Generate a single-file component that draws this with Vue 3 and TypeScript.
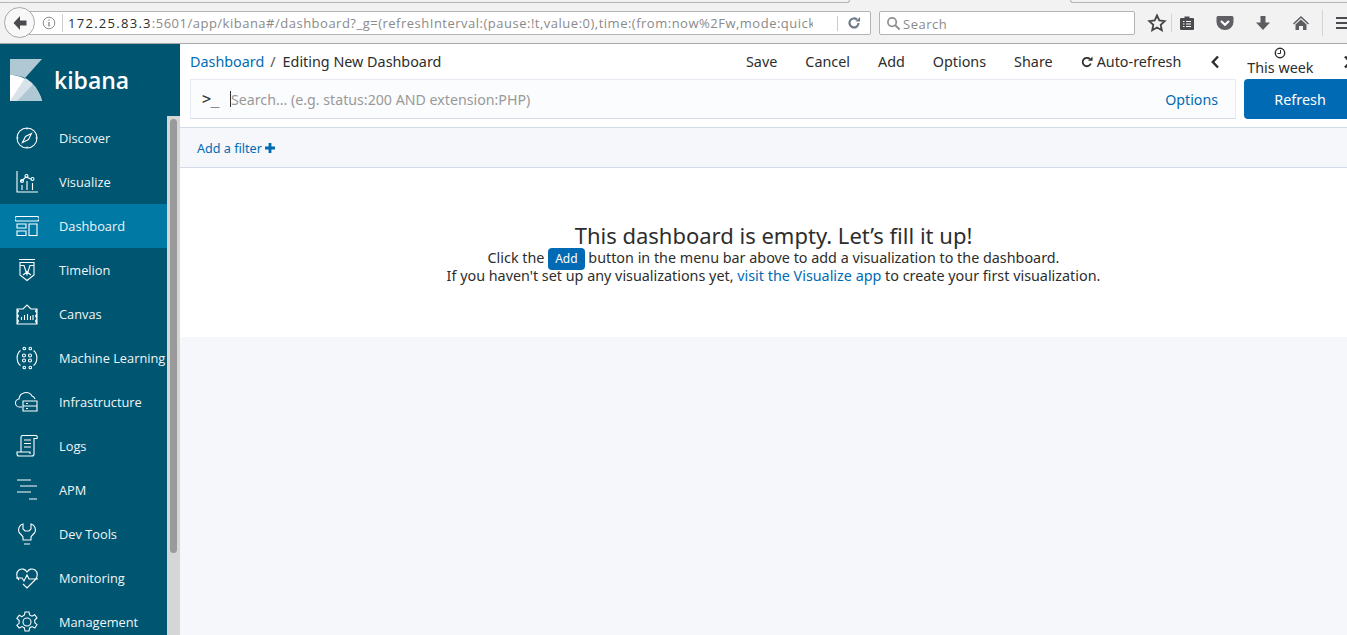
<script setup lang="ts">
interface NavItem {
  label: string
  icon: string
  active?: boolean
}

// icons are stroked on a 24 box, white-ish on the teal sidebar
const navItems: NavItem[] = [
  { label: 'Discover', icon: 'M12 2a10 10 0 1 0 0 20a10 10 0 1 0 0-20M16.500 7.500l-3 6-6 3 3-6zM12 2v1.500M12 20.500V22M2 12h1.500M20.500 12H22' },
  { label: 'Visualize', icon: 'M2 1v21h21M6 11.500l5-4.500 6 2.500M5.500 11a1.500 1.500 0 1 0 3 0a1.500 1.500 0 1 0-3 0M10 6a1.500 1.500 0 1 0 3 0a1.500 1.500 0 1 0-3 0M16 9a1.500 1.500 0 1 0 3 0a1.500 1.500 0 1 0-3 0M7 15v5M12 11v9M17.500 13v7' },
  { label: 'Dashboard', icon: 'M2 2.500h20a1 1 0 0 1 0 4.500H2a1 1 0 0 1 0-4.500zM2 10h9v4H2zM2 17h9v4.500H2zM14 10h8v11.500h-8z', active: true },
  { label: 'Timelion', icon: 'M4 1.500h16M5 4.500h14V17l-7 5.500L5 17zM5 7.500h4l3 9 3-9h4M8 17l4-3 4 3' },
  { label: 'Canvas', icon: 'M2 7h6l4-4 4 4h6v15H2zM2 7l1.500 2L2 11.500 3.500 14 2 16.500 3.500 19 2 22M22 7l-1.500 2 1.500 2.500-1.500 2.500 1.500 2.500-1.500 2.500L22 22M6.500 18v-3M9.500 18v-5M12.500 18v-6M15.500 18v-4M18 18v-5' },
  { label: 'Machine Learning', icon: 'M8 2.500a1.300 1.300 0 1 0 2.600 0a1.300 1.300 0 1 0-2.600 0M14 2.500a1.300 1.300 0 1 0 2.600 0a1.300 1.300 0 1 0-2.600 0M8 21.500a1.300 1.300 0 1 0 2.600 0a1.300 1.300 0 1 0-2.600 0M14 21.500a1.300 1.300 0 1 0 2.600 0a1.300 1.300 0 1 0-2.600 0M7.500 9.500a1.500 1.500 0 1 0 3 0a1.500 1.500 0 1 0-3 0M13.500 9.500a1.500 1.500 0 1 0 3 0a1.500 1.500 0 1 0-3 0M7.500 14.500a1.500 1.500 0 1 0 3 0a1.500 1.500 0 1 0-3 0M13.500 14.500a1.500 1.500 0 1 0 3 0a1.500 1.500 0 1 0-3 0M5.500 4.500C1 8 1 16 5.500 19.500M18.500 4.500C23 8 23 16 18.500 19.500' },
  { label: 'Infrastructure', icon: 'M7 17H5a4 4 0 0 1-1-8a7 7 0 0 1 13-3a5 5 0 0 1 3 3M8 11h14v10H8zM8 16h14M11 13.500h2M11 18.500h2' },
  { label: 'Logs', icon: 'M6 18V3a1.500 1.500 0 0 1 1.500-1.500H21a2 2 0 0 1 1 3h-3V20a2 2 0 0 1-2 2H4a2 2 0 0 1-2-2v-2h13v2M9 6h7M9 9.500h7M9 13h7' },
  { label: 'APM', icon: 'M2 2h14M5 8h17M2 14h14M14 21h8' },
  { label: 'Dev Tools', icon: 'M8 2C4 3 3 7 4 10c1 2 3 3 4 5v3h8v-3c1-2 3-3 4-5 1-3 0-7-4-8v5l-2 2h-4L8 7zM9 22h6' },
  { label: 'Monitoring', icon: 'M4 14C1 11 1 6 4 4c3-2 6-1 8 2 2-3 5-4 8-2 3 2 3 7 0 10l-8 8-4-4M1 12h6l2 3 3-6 2 4h9' },
  { label: 'Management', icon: 'M12 8a4 4 0 1 0 0 8a4 4 0 1 0 0-8M10 2h4l.6 3 2.400 1.200 2.700-1.500 2.300 3.300-2.300 2 .1 2.800 2.200 1.900-2.200 3.300-2.800-1.400-2.400 1.300-.6 3.100h-4l-.6-3.100-2.400-1.300-2.800 1.400L1.900 15.200 4.100 13.300l.1-2.800-2.300-2 2.300-3.300 2.700 1.500L9.400 5z' },
]

const pageActions = ['Save', 'Cancel', 'Add', 'Options', 'Share']
</script>

<template>
  <div class="window">
    <header class="browser-bar">
      <div class="tabstrip">
        <span class="tab-line left"></span>
        <span class="tab-line right"></span>
      </div>
      <div class="toolbar">
        <div class="url-wrap">
          <span class="back-btn">
            <svg width="18" height="18" viewBox="0 0 18 18"><path d="M9 2 2.500 9 9 16v-4.500h6.500v-5H9z" fill="#4a4a4f" /></svg>
          </span>
          <div class="url-box">
            <svg class="info" width="14" height="14" viewBox="0 0 14 14"><circle cx="7" cy="7" r="5.800" fill="none" stroke="#8c8c8c" /><path d="M7 6v4.500M7 3.500v1.300" stroke="#8c8c8c" stroke-width="1.400" /></svg>
            <span class="url-sep"></span>
            <span class="url-text"><b>172.25.83.3</b>:5601/app/kibana#/dashboard?_g=(refreshInterval:(pause:!t,value:0),time:(from:now%2Fw,mode:quick</span>
            <span class="reload">
              <svg width="14" height="14" viewBox="0 0 14 14"><path d="M11.500 7A4.500 4.500 0 1 1 10 3.600" fill="none" stroke="#6f7b87" stroke-width="2.200" /><path d="M8.500 5.500H13V1z" fill="#6f7b87" /></svg>
            </span>
          </div>
        </div>
        <div class="search-box">
          <svg width="15" height="15" viewBox="0 0 16 16"><circle cx="6.500" cy="6.500" r="4.500" fill="none" stroke="#909090" stroke-width="1.800" /><path d="m10 10 4.500 4.500" stroke="#909090" stroke-width="2.200" /></svg>
          <span class="search-label">Search</span>
        </div>
        <div class="tools">
          <svg class="t-star" width="20" height="20" viewBox="0 0 20 20"><path d="m10 2.500 2.300 5 5.400.6-4 3.700 1.100 5.400-4.800-2.700-4.800 2.700 1.100-5.400-4-3.700 5.400-.6z" fill="none" stroke="#444" stroke-width="1.800" /></svg>
          <span class="t-sep"></span>
          <svg class="t-list" width="16" height="16" viewBox="0 0 16 16"><path d="M2 3h3.500V1.500h5V3H14a1 1 0 0 1 1 1v10a1 1 0 0 1-1 1H2a1 1 0 0 1-1-1V4a1 1 0 0 1 1-1z" fill="#4a4a4f" /><path d="M4 6.500h1.500M7 6.500h5M4 9h1.500M7 9h5M4 11.500h1.500M7 11.500h5" stroke="#fff" /></svg>
          <svg class="t-pocket" width="18" height="16" viewBox="0 0 18 16"><path d="M2 1h14a1.500 1.500 0 0 1 1.500 1.500V7A8.500 8 0 0 1 .5 7V2.500A1.500 1.500 0 0 1 2 1z" fill="#5f5f64" /><path d="m5 6 4 3.800L13 6" fill="none" stroke="#fff" stroke-width="2.200" /></svg>
          <svg class="t-down" width="16" height="16" viewBox="0 0 16 16"><path d="M5.500 1h5v6.500H15L8 15 1 7.500h4.500z" fill="#5c5c61" /></svg>
          <svg class="t-home" width="18" height="16" viewBox="0 0 18 16"><path d="M9 1 1 8.500l1 1L9 3l7 6.500 1-1z" fill="#5c5c61" /><path d="M3.500 9.500 9 4.500l5.500 5V15H11v-4H7v4H3.500z" fill="#5c5c61" /></svg>
          <span class="t-sep t-sep-2"></span>
          <span class="burger"><i></i><i></i><i></i></span>
        </div>
      </div>
    </header>

    <div class="kibana">
      <aside class="sidebar">
        <div class="logo">
          <svg width="32" height="42" viewBox="0 0 32 42">
            <path d="M0 0h32L15 19C11 17 5 16 0 16z" fill="#b0c8d3" />
            <path d="M0 16c14 0 28 10 32 26H0z" fill="#fff" />
            <path d="M15 19c3 1.500 5.500 3.500 8 6L7 42H0z" fill="#d7e3e8" />
            <path d="M23 25c4 4 7 10 9 17H7z" fill="#b0c8d3" />
          </svg>
          <span class="logo-word">kibana</span>
        </div>
        <div class="nav-scroll">
          <nav class="nav">
            <a v-for="item in navItems" :key="item.label" class="nav-item" :class="{ active: item.active }">
              <svg class="nav-icon" width="24" height="24" viewBox="0 0 24 24"><path :d="item.icon" fill="none" stroke="#fff" stroke-width="1.100" /></svg>
              <span>{{ item.label }}</span>
            </a>
          </nav>
          <div class="scrollbar"><div class="thumb"></div></div>
        </div>
      </aside>

      <main class="content">
        <div class="top">
          <div class="menu-row">
            <div class="crumbs">
              <a class="link">Dashboard</a><span class="slash">/</span><span>Editing New Dashboard</span>
            </div>
            <div class="actions">
              <span v-for="action in pageActions" :key="action" class="action">{{ action }}</span>
              <span class="auto">
                <svg width="12" height="12" viewBox="0 0 12 12"><path d="M9.800 7.500A4.200 4.200 0 1 1 8.800 3" fill="none" stroke="#2d2d2d" stroke-width="1.800" /><path d="M7 4.800h4.500V.5z" fill="#2d2d2d" /></svg>
                Auto-refresh
              </span>
              <svg class="chev" width="10" height="14" viewBox="0 0 10 14"><path d="M8 1.500 2.800 7 8 12.500" fill="none" stroke="#2d2d2d" stroke-width="2.400" /></svg>
              <span class="week">
                <svg width="12" height="12" viewBox="0 0 12 12"><circle cx="6" cy="6" r="4.700" fill="none" stroke="#2d2d2d" stroke-width="1.400" /><path d="M6.500 3v3.500H3.500" fill="none" stroke="#2d2d2d" /></svg>
                <span>This week</span>
              </span>
              <svg class="chev" width="10" height="14" viewBox="0 0 10 14"><path d="M2 1.500 7.200 7 2 12.500" fill="none" stroke="#2d2d2d" stroke-width="2.400" /></svg>
            </div>
          </div>
          <div class="query-row">
            <div class="query">
              <span class="prompt">&gt;_</span>
              <span class="caret"></span>
              <span class="placeholder">Search... (e.g. status:200 AND extension:PHP)</span>
              <a class="link query-options">Options</a>
            </div>
            <button class="refresh">Refresh</button>
          </div>
        </div>

        <div class="filter-bar">
          <a class="link">Add a filter</a>
          <svg width="10" height="10" viewBox="0 0 10 10"><path d="M3.600 0h2.800v3.600H10v2.800H6.400V10H3.600V6.400H0V3.600h3.600z" fill="#006bb4" /></svg>
        </div>

        <section class="empty">
          <h2>This dashboard is empty. Let’s fill it up!</h2>
          <p>Click the <span class="add-chip">Add</span> button in the menu bar above to add a visualization to the dashboard.</p>
          <p>If you haven't set up any visualizations yet, <a class="link">visit the Visualize app</a> to create your first visualization.</p>
        </section>
      </main>
    </div>
  </div>
</template>

<style scoped>
.window {
  width: 1347px;
  height: 635px;
  overflow: hidden;
  display: flex;
  flex-direction: column;
  font-family: "Noto Sans", "Open Sans", sans-serif;
  color: #2d2d2d;
}

.browser-bar {
  height: 44px;
  flex: none;
  box-sizing: border-box;
  display: flex;
  flex-direction: column;
  background: #f2f2f2;
  border-bottom: 1px solid #a8a8a8;
}
.tabstrip {
  height: 3px;
  flex: none;
  display: flex;
  justify-content: space-between;
}
.tab-line {
  display: block;
  height: 3px;
  box-sizing: border-box;
  border-bottom: 1px solid #b5b5b5;
}
.tab-line.left {
  width: 850px;
  border-right: 1px solid #b5b5b5;
  border-bottom-right-radius: 5px;
}
.tab-line.right {
  width: 277px;
  border-left: 1px solid #b5b5b5;
  border-bottom-left-radius: 5px;
}
.toolbar {
  flex: 1;
  display: flex;
  align-items: center;
  padding-left: 5px;
  font-family: "Open Sans", sans-serif;
}
.url-wrap {
  position: relative;
  width: 866px;
  flex: none;
  padding-left: 14px;
  box-sizing: border-box;
}
.back-btn {
  position: absolute;
  left: -1px;
  top: -4px;
  width: 29px;
  height: 29px;
  border: 1px solid #a8a8a8;
  border-radius: 50%;
  background: #f8f8f8;
  display: flex;
  align-items: center;
  justify-content: center;
  z-index: 1;
}
.url-box {
  height: 24px;
  box-sizing: border-box;
  background: #fff;
  border: 1px solid #b4b4b4;
  border-radius: 2px;
  display: flex;
  align-items: center;
  padding-left: 22px;
  overflow: hidden;
  font-size: 13px;
}
.info { flex: none; }
.url-sep {
  flex: none;
  width: 1px;
  height: 18px;
  background: #ccc;
  margin: 0 5px 0 6px;
}
.url-text {
  flex: none;
  width: 745px;
  white-space: nowrap;
  overflow: hidden;
  color: #8a8a8a;
  letter-spacing: 0.5px;
}
.url-text b {
  font-weight: 400;
  color: #2b2b2b;
  letter-spacing: 1.28px;
}
.reload {
  flex: none;
  width: 32px;
  height: 15px;
  margin-left: auto;
  border-left: 1px solid #ccc;
  display: flex;
  align-items: center;
  justify-content: center;
}
.search-box {
  width: 256px;
  height: 24px;
  flex: none;
  box-sizing: border-box;
  margin-left: 8px;
  background: #fff;
  border: 1px solid #b4b4b4;
  border-radius: 2px;
  display: flex;
  align-items: center;
  gap: 2px;
  padding-left: 6px;
  font-size: 13px;
  letter-spacing: 0.5px;
  color: #8a8a8a;
}
.search-label { padding-top: 1px; }
.tools {
  flex: 1;
  display: flex;
  align-items: center;
  padding-left: 12px;
}
.tools svg { flex: none; }
.t-sep {
  width: 1px;
  flex: none;
  height: 18px;
  background: #d4d4d4;
  margin: 0 7px 0 4px;
}
.t-pocket { margin-left: 21px; }
.t-down { margin-left: 21px; }
.t-home { margin-left: 21px; }
.t-sep-2 { margin: 0 13px 0 12px; height: 26px; }
.burger {
  display: flex;
  flex-direction: column;
  gap: 3px;
  width: 12px;
  flex: none;
}
.burger i {
  display: block;
  height: 2px;
  background: #4a4a4f;
}

.kibana {
  flex: 1;
  display: flex;
  min-height: 0;
}
.sidebar {
  width: 180px;
  flex: none;
  background: #005571;
  display: flex;
  flex-direction: column;
  color: #fff;
  font-family: "Open Sans", sans-serif;
}
.logo {
  height: 72px;
  flex: none;
  display: flex;
  align-items: center;
  gap: 12px;
  padding: 0 0 0 10px;
  box-sizing: border-box;
}
.logo-word {
  font-size: 23px;
  font-weight: 600;
  line-height: 1;
}
.nav-scroll {
  flex: 1;
  display: flex;
  min-height: 0;
}
.nav {
  width: 167px;
  flex: none;
}
.nav-item {
  height: 44px;
  display: flex;
  align-items: center;
  padding-left: 15px;
  font-size: 12.8px;
  color: #f0f5f7;
  white-space: nowrap;
}
.nav-item.active { background: #0079a5; }
.nav-icon {
  flex: none;
  margin-right: 20px;
}
.scrollbar {
  width: 13px;
  background: #d6d6d6;
  padding: 3px 0 0 3px;
  box-sizing: border-box;
}
.thumb {
  width: 7px;
  height: 434px;
  background: #9a9a9a;
  border-radius: 4px;
}

.content {
  flex: 1;
  min-width: 0;
  display: flex;
  flex-direction: column;
  background: #f5f7fa;
}
.top {
  background: #fff;
  height: 84px;
  flex: none;
  box-sizing: border-box;
  border-bottom: 1px solid #d3dce6;
  padding-left: 10px;
}
.menu-row {
  height: 35px;
  display: flex;
  align-items: center;
  font-size: 14.35px;
}
.crumbs {
  width: 556px;
  flex: none;
  white-space: nowrap;
}
.slash {
  margin: 0 7px 0 6px;
  color: #555;
}
.link { color: #006bb4; }
.actions {
  display: flex;
  align-items: center;
  flex: none;
  white-space: nowrap;
}
.action { margin-right: 28px; }
.auto {
  display: flex;
  align-items: center;
  gap: 4px;
}
.week {
  display: flex;
  flex-direction: column;
  align-items: center;
  margin: 0 29px 0 27px;
  line-height: 16px;
  padding-top: 3px;
  height: 35px;
  box-sizing: border-box;
}
.week span { margin-top: 1px; }
.chev {
  flex: none;
  margin-left: 29px;
}
.week + .chev { margin-left: 0; }
.query-row {
  display: flex;
  align-items: flex-start;
}
.query {
  width: 1046px;
  height: 40px;
  flex: none;
  box-sizing: border-box;
  background: #fbfcfd;
  border: 1px solid #e6ebf2;
  border-bottom: 1px solid #d3dce6;
  display: flex;
  align-items: center;
  padding-left: 11px;
  font-size: 14.2px;
}
.prompt {
  width: 28px;
  flex: none;
  color: #333;
  font-family: "DejaVu Sans Mono", monospace;
  font-size: 15px;
  letter-spacing: -0.5px;
}
.caret {
  width: 1px;
  height: 16px;
  background: #333;
  flex: none;
}
.placeholder {
  flex: 1;
  color: #999;
}
.query-options { margin-right: 17px; }
.refresh {
  width: 112px;
  height: 40px;
  flex: none;
  margin-left: 8px;
  border: 0;
  border-radius: 4px 0 0 4px;
  background: #006bb4;
  color: #fff;
  font: 14.4px "Noto Sans", sans-serif;
  padding: 0;
}

.filter-bar {
  height: 40px;
  flex: none;
  box-sizing: border-box;
  background: #f5f7fa;
  border-bottom: 1px solid #d3dce6;
  display: flex;
  align-items: center;
  gap: 3px;
  padding: 1px 0 0 17px;
  font-size: 12.6px;
}
.empty {
  height: 169px;
  flex: none;
  box-sizing: border-box;
  background: #fff;
  text-align: center;
  padding: 55px 0 0 20px;
  font-size: 14.35px;
  line-height: 19px;
}
.empty h2 {
  margin: 0;
  font-size: 22px;
  font-weight: 400;
  line-height: 25px;
}
.empty p {
  margin: 0;
  height: 18px;
}
.add-chip {
  display: inline-block;
  background: #006bb4;
  color: #fff;
  border-radius: 4px;
  font-size: 12px;
  line-height: 22px;
  padding: 0 7px;
  margin: -2px 0;
  vertical-align: middle;
}
</style>
